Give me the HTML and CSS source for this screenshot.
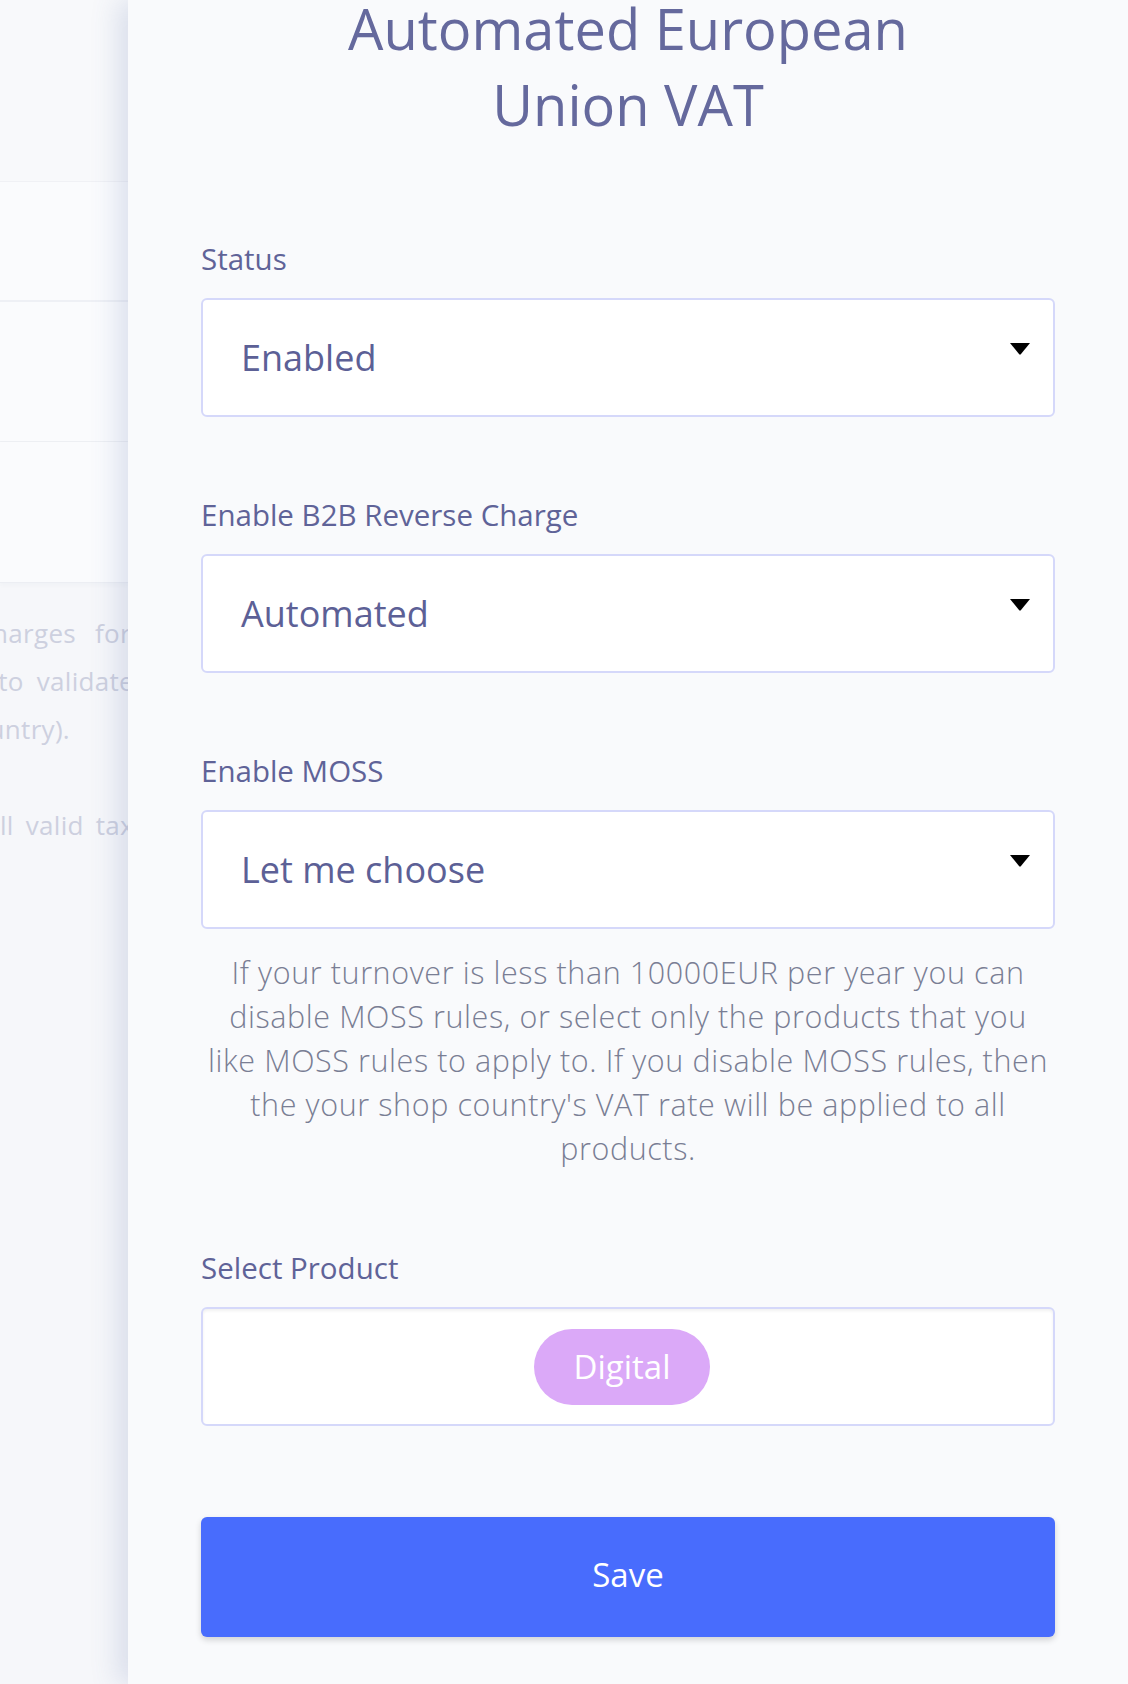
FILE: index.html
```html
<!DOCTYPE html>
<html lang="en">
<head>
<meta charset="utf-8">
<title>Automated European Union VAT</title>
<link rel="stylesheet" href="styles.css">
</head>
<body>
<div class="screen">
  <div class="page">
    <div class="page-top"></div>
    <div class="page-card">
      <div class="page-row"></div>
      <div class="page-row"></div>
      <div class="page-row"></div>
    </div>
    <div class="page-text">
      <div class="page-line page-line--first">charges for</div>
      <div class="page-line page-line--second">to validate</div>
      <div class="page-line page-line--short">country).</div>
      <div class="page-line page-line--para">all valid tax</div>
    </div>
  </div>

  <aside class="drawer">
    <h1 class="title">Automated European Union VAT</h1>

    <div class="field">
      <div class="label">Status</div>
      <div class="select">
        <span class="select-value">Enabled</span>
        <svg class="caret" viewBox="0 0 20 12" width="20" height="12"><polygon points="0,0 20,0 10.6,11.4 9.4,11.4" fill="#000"/></svg>
      </div>
    </div>

    <div class="field">
      <div class="label">Enable B2B Reverse Charge</div>
      <div class="select">
        <span class="select-value">Automated</span>
        <svg class="caret" viewBox="0 0 20 12" width="20" height="12"><polygon points="0,0 20,0 10.6,11.4 9.4,11.4" fill="#000"/></svg>
      </div>
    </div>

    <div class="field">
      <div class="label">Enable MOSS</div>
      <div class="select">
        <span class="select-value">Let me choose</span>
        <svg class="caret" viewBox="0 0 20 12" width="20" height="12"><polygon points="0,0 20,0 10.6,11.4 9.4,11.4" fill="#000"/></svg>
      </div>
      <p class="hint">If your turnover is less than 10000EUR per year you can<br>disable MOSS rules, or select only the products that you<br>like MOSS rules to apply to. If you disable MOSS rules, then<br>the your shop country's VAT rate will be applied to all<br>products.</p>
    </div>

    <div class="field">
      <div class="label">Select Product</div>
      <div class="multi">
        <span class="chip">Digital</span>
      </div>
    </div>

    <button class="save" type="button">Save</button>
  </aside>
</div>
</body>
</html>
```

FILE: styles.css
```css
html, body {
  margin: 0;
  padding: 0;
}

body {
  width: 1128px;
  height: 1684px;
  overflow: hidden;
  background: #f6f7fa;
  font-family: "Open Sans", "Noto Sans", "Liberation Sans", sans-serif;
}

.screen {
  display: grid;
  grid-template-columns: 128px 1000px;
  height: 1684px;
}

/* background page (behind the drawer) */
.page {
  overflow: hidden;
  background: #f6f7fa;
}

.page-top {
  height: 182px;
  background: #f8f9fb;
  border-bottom: 1px solid #f0f1f5;
  box-sizing: border-box;
}

.page-card {
  background: #fafbfd;
}

.page-row {
  height: 140px;
  border-bottom: 1px solid #eef0f4;
  box-sizing: border-box;
}

.page-row:first-child {
  height: 120px;
  border-bottom: 2px solid #eef0f5;
}

.page-row:last-child {
  height: 141px;
  border-bottom: 1px solid #eceef3;
  box-shadow: 0 2px 4px rgba(120, 130, 160, 0.05);
}

.page-text {
  width: 134px;
  padding-top: 26px;
  font-size: 26px;
  line-height: 48px;
  letter-spacing: 0.3px;
  color: #cdd0df;
}

.page-line {
  display: flex;
  justify-content: flex-end;
  white-space: nowrap;
}

.page-line--first {
  padding-right: 3px;
  word-spacing: 12px;
}

.page-line--second {
  word-spacing: 6px;
}

.page-line--short {
  padding-right: 64px;
}

.page-line--para {
  margin-top: 48px;
  word-spacing: 5px;
}

/* drawer */
.drawer {
  position: relative;
  z-index: 1;
  background: #f9fafc;
  box-shadow: -10px 0 26px rgba(70, 96, 160, 0.17);
  padding: 0 73px;
}

.title {
  max-width: 640px;
  margin: -10px auto 97px;
  font-size: 56px;
  line-height: 76px;
  font-weight: 400;
  text-align: center;
  color: #65699d;
}

.field + .field {
  margin-top: 78px;
}

.label {
  font-size: 29.5px;
  line-height: 40px;
  color: #5f6398;
  margin-bottom: 19px;
}

.select {
  height: 119px;
  box-sizing: border-box;
  border: 2px solid #d5d8fa;
  border-radius: 6px;
  background: #ffffff;
  display: flex;
  align-items: center;
  justify-content: space-between;
  padding: 0 23px 0 38px;
}

.select-value {
  font-size: 36px;
  line-height: 49px;
  color: #5c6096;
}

.caret {
  align-self: flex-start;
  margin-top: 43px;
  flex: none;
}

.hint {
  margin: 21px 0 0;
  font-size: 30.5px;
  font-weight: 300;
  letter-spacing: 0.6px;
  line-height: 44px;
  text-align: center;
  color: #797e94;
}

.multi {
  height: 119px;
  box-sizing: border-box;
  border: 2px solid #d5d8fa;
  border-radius: 6px;
  background: #ffffff;
  box-shadow: inset 0 2px 3px rgba(0, 0, 0, 0.06);
  display: flex;
  align-items: center;
  justify-content: center;
}

.chip {
  height: 76px;
  padding: 0 40px;
  margin-right: 12px;
  border-radius: 38px;
  background: #dba9f8;
  color: #ffffff;
  font-size: 33px;
  display: flex;
  align-items: center;
}

.save {
  display: block;
  width: 100%;
  height: 120px;
  margin-top: 91px;
  padding: 0 0 6px;
  border: none;
  border-radius: 6px;
  background: #486cfd;
  color: #ffffff;
  font-family: inherit;
  font-size: 33px;
  box-shadow: 0 3px 6px rgba(0, 0, 0, 0.16);
}
```
